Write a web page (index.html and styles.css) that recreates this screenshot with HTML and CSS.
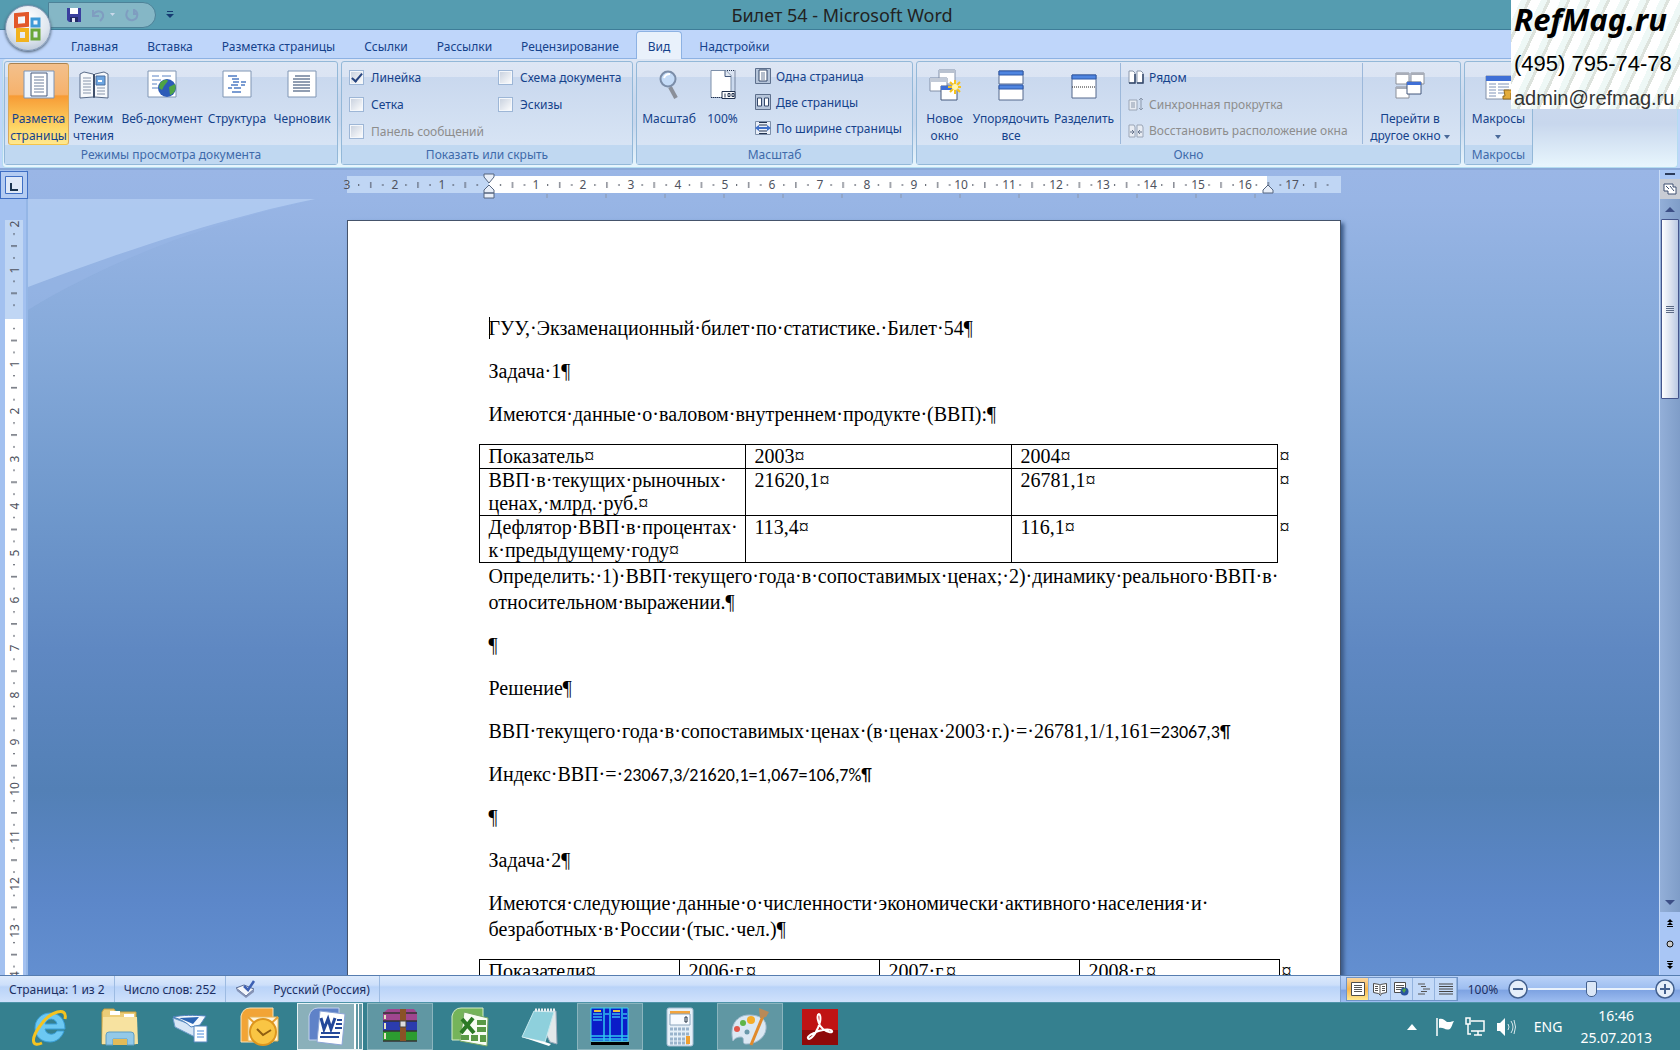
FILE: index.html
```html
<!DOCTYPE html>
<html lang="ru">
<head>
<meta charset="utf-8">
<title>Билет 54 - Microsoft Word</title>
<link rel="stylesheet" href="styles.css">
</head>
<body>
<header class="titlebar">
  <div class="quick">
    <button class="q" aria-label="Сохранить"><svg width="14" height="14" viewBox="0 0 14 14"><path d="M0 0h14v14H2l-2-2z" fill="#3a3f9e"/><path d="M3 0h8v6H3z" fill="#fff"/><path d="M3 9h8v5H3z" fill="#222a66"/><path d="M5 10h3v4H5z" fill="#dfe4f4"/></svg></button>
    <button class="q" aria-label="Отменить"><svg width="24" height="14" viewBox="0 0 24 14"><path d="M2 2v6h6M2 7c4-6 11-4 10 2-1 2-2 3-3 4" fill="none" stroke="#7f9dc0" stroke-width="2"/><path d="M19 5h5l-2.500 3z" fill="#c9d9ea"/></svg></button>
    <button class="q" aria-label="Вернуть"><svg width="14" height="14" viewBox="0 0 14 14"><path d="M3 2C-1 8 3 13 8 12s6-8 1-10M9 1v5h4" fill="none" stroke="#7f9dc0" stroke-width="2"/></svg></button>
  </div>
  <button class="q more" aria-label="Настройка панели"><svg width="8" height="8" viewBox="0 0 8 8"><path d="M1 0h6v1H1zM0 3h8L4 7z" fill="#163c72"/></svg></button>
  <h1>Билет 54 - Microsoft Word</h1>
  <button class="orb" aria-label="Office"><svg width="30" height="32" viewBox="0 0 30 32"><g fill="none"><path d="M3 3l11-1v11L3 14z" stroke="#e2582a" stroke-width="4"/><path d="M19 7h7v7h-7z" stroke="#3f9ad6" stroke-width="3"/><path d="M5 18h9v10H5z" stroke="#f2b21c" stroke-width="4"/><path d="M19 18h7v9h-7z" stroke="#6aa63a" stroke-width="3"/></g></svg></button>
</header>
<nav class="tabs">
  <button>Главная</button><button>Вставка</button><button>Разметка страницы</button><button>Ссылки</button><button>Рассылки</button><button>Рецензирование</button><button class="on">Вид</button><button>Надстройки</button>
</nav>
<section class="ribbon">
  <div class="panel">
  <div class="group g1">
    <div class="tools">
      <button class="big sel w61"><svg width="32" height="30" viewBox="0 0 32 30"><path d="M1 1h30v27H1z" fill="#eef4fc" stroke="#7d94b5"/><path d="M8 3h16v23H8z" fill="#fff" stroke="#44587c"/><path d="M11 7h10M11 10h10M11 13h10M11 16h10M11 19h10M11 22h10" stroke="#6d7f9c"/></svg><span>Разметка<br>страницы</span></button>
      <button class="big w49"><svg width="30" height="30" viewBox="0 0 30 30"><path d="M1 4l4-2 9 2 1 1 1-1 9-2 4 2v24l-13-1-1 1-1-1-13 1z" fill="#f7f9fc" stroke="#596b88"/><path d="M15 4v23" stroke="#3f4f6b" stroke-width="2"/><path d="M4 8h8M4 11h8M4 14h8M4 17h8M4 20h8M4 23h8M18 18h8M18 21h8M18 24h8" stroke="#8795ab"/><path d="M17 6h9v9h-9z" fill="#6da5e0" stroke="#4b6ea0"/><path d="M19 10h4v2h-4z" fill="#fff"/></svg><span>Режим<br>чтения</span></button>
      <button class="big w88"><svg width="30" height="30" viewBox="0 0 30 30"><path d="M1 1h28v26H1z" fill="#fff" stroke="#8096b4"/><path d="M5 6h7M15 6h9M5 10h9M5 14h5M5 18h6" stroke="#5b83c4"/><circle cx="20" cy="18" r="9" fill="#2c5bb8"/><path d="M13 13c4-4 7-4 8-2l-4 5-2 4-3-2zM22 17l6-3c2 5-1 10-5 11z" fill="#4fa444"/></svg><span>Веб-документ</span></button>
      <button class="big w62"><svg width="30" height="30" viewBox="0 0 30 30"><path d="M1 1h28v26H1z" fill="#fff" stroke="#8096b4"/><path d="M6 6h9M10 9h7M11 12h6M19 12h5M9 15h7M6 18h4M12 18h7M10 22h9M19 15h4" stroke="#4f7cc4" stroke-width="1.500"/></svg><span>Структура</span></button>
      <button class="big w68"><svg width="30" height="30" viewBox="0 0 30 30"><path d="M1 1h28v26H1z" fill="#fff" stroke="#8096b4"/><path d="M8 6h15M6 9h17M6 12h17M6 15h17M6 18h17M6 21h17" stroke="#6e7f99" stroke-width="1.300"/></svg><span>Черновик</span></button>
    </div>
    <h2>Режимы просмотра документа</h2>
  </div>
  <div class="group g2">
    <div class="tools checks">
      <label><input type="checkbox" checked>Линейка</label><label><input type="checkbox">Схема документа</label>
      <label><input type="checkbox">Сетка</label><label><input type="checkbox">Эскизы</label>
      <label class="off"><input type="checkbox" disabled>Панель сообщений</label>
    </div>
    <h2>Показать или скрыть</h2>
  </div>
  <div class="group g3">
    <div class="tools">
      <button class="big w58"><svg width="20" height="30" viewBox="0 0 20 30"><path d="M11 17l6 11" stroke="#8a8f99" stroke-width="4"/><circle cx="9" cy="9" r="7.500" fill="#c4dbf7" stroke="#7b8da8" stroke-width="2"/><path d="M5 8c1-3 3-4 6-4" stroke="#fff" stroke-width="2" fill="none"/></svg><span>Масштаб</span></button>
      <button class="big w49"><svg width="26" height="31" viewBox="0 0 26 31"><path d="M1 1h15l5 5v22H1z" fill="#fff" stroke="#7d8fa9"/><path d="M15 1v6h6" fill="#dfe7f2" stroke="#44587c"/><path d="M17 1h8v27H1" fill="none" stroke="#22324f" stroke-dasharray="1 1"/><path d="M12 22h13v7H12z" fill="#fff" stroke="#22324f"/><path d="M15 24v4M18 24h2v3h-2zM22 24h2v3h-2z" stroke="#22324f" fill="none"/></svg><span>100%</span></button>
      <div class="small zoomcol">
        <button><svg width="16" height="16" viewBox="0 0 16 16"><path d="M.5.500h15v15H.500z" fill="#b6c5da" stroke="#5d6f8c"/><path d="M4 2h8v11H4z" fill="#fff" stroke="#34486b"/><path d="M6 5h4M6 7h4M6 9h4M6 11h4" stroke="#6b7c98"/></svg>Одна страница</button>
        <button><svg width="16" height="16" viewBox="0 0 16 16"><path d="M.5.500h15v15H.500z" fill="#b6c5da" stroke="#5d6f8c"/><path d="M2.500 4h4v8h-4zM9.500 4h4v8h-4z" fill="#fff" stroke="#34486b"/></svg>Две страницы</button>
        <button><svg width="16" height="16" viewBox="0 0 16 16"><path d="M.5 1.500h15v13H.500z" fill="#e9eff8" stroke="#7d8fa9"/><path d="M4 2.500h8M4 5h8M4 11h8M4 13.500h8" stroke="#22324f"/><path d="M0 8l4-3v2h8V5l4 3-4 3V9H4v2z" fill="#3f6fc9"/></svg>По ширине страницы</button>
      </div>
    </div>
    <h2>Масштаб</h2>
  </div>
  <div class="group g4">
    <div class="tools">
      <button class="big w49"><svg width="32" height="32" viewBox="0 0 32 32"><path d="M10 1h16v14H10z" fill="#fff" stroke="#8290a8"/><path d="M10 1h16v3H10z" fill="#b9c2d0"/><path d="M1 9h17v13H1z" fill="#fff" stroke="#8290a8"/><path d="M1 9h17v4H1z" fill="#c3cbd8"/><path d="M12 17h16v14H12z" fill="#fff" stroke="#44587c"/><path d="M12 17h16v4H12z" fill="#3f6fd6"/><path d="M26 11v14M19 18h14M21 13l10 10M31 13L21 23" stroke="#f6c21c" stroke-width="2"/><circle cx="26" cy="18" r="3" fill="#fff6b0"/></svg><span>Новое<br>окно</span></button>
      <button class="big w84"><svg width="26" height="32" viewBox="0 0 26 32"><path d="M1 2h24v13H1zM1 17h24v14H1z" fill="#fff" stroke="#55698c"/><path d="M1 2h24v4H1zM1 16h24v4H1z" fill="#4f85e0" stroke="#2f59a8"/></svg><span>Упорядочить<br>все</span></button>
      <button class="big w62"><svg width="26" height="30" viewBox="0 0 26 30"><path d="M1 5h24v23H1z" fill="#fff" stroke="#55698c"/><path d="M1 5h24v4H1z" fill="#4f85e0" stroke="#2f59a8"/><path d="M1 17h24" stroke="#222" stroke-dasharray="1 1"/></svg><span>Разделить</span></button>
      <div class="small wincol">
        <button><svg width="16" height="14" viewBox="0 0 16 14"><path d="M1 1h4l2 2v10H1zM9 1h4l2 2v10H9z" fill="#fff" stroke="#8a97ab"/><path d="M7 4v9H1M15 4v9H9" fill="none" stroke="#34486b" stroke-width="1.500"/></svg>Рядом</button>
        <button disabled><svg width="16" height="14" viewBox="0 0 16 14"><path d="M1 3h8v10H1z" fill="#e8ecf3" stroke="#9aa5b6"/><path d="M3 6h4M3 8h4M3 10h4M13 1v12M11 3l2-2 2 2M11 11l2 2 2-2" stroke="#8a97ab" fill="none"/></svg>Синхронная прокрутка</button>
        <button disabled><svg width="16" height="14" viewBox="0 0 16 14"><path d="M1 1h5l1 2v10H1zM9 1h5l1 2v10H9z" fill="#e8ecf3" stroke="#9aa5b6"/><path d="M2 8h4M4 6l2 2-2 2M14 8h-4M12 6l-2 2 2 2" stroke="#66748c" fill="none"/></svg>Восстановить расположение окна</button>
      </div>
      <button class="big w94"><svg width="30" height="30" viewBox="0 0 30 30"><g fill="#fff" stroke="#8a8f99"><path d="M1 3h13v11H1zM16 3h13v11H16zM1 17h13v11H1z"/></g><path d="M1 3h13v2H1zM16 3h13v2H16zM1 17h13v2H1z" fill="#a8adb8"/><path d="M12 12h14v12H12z" fill="#fff" stroke="#44587c"/><path d="M12 12h14v3H12z" fill="#3f6fd6"/></svg><span>Перейти в<br>другое окно <svg class="arr" width="6" height="4" viewBox="0 0 6 4"><path d="M0 0h6L3 4z" fill="#4a6a9a"/></svg></span></button>
    </div>
    <h2>Окно</h2>
  </div>
  <div class="group g5">
    <div class="tools">
      <button class="big w61"><svg width="28" height="30" viewBox="0 0 28 30"><path d="M1 6h26v23H1z" fill="#fff" stroke="#8290a8"/><path d="M1 6h26v5H1z" fill="#3f6fd6"/><path d="M4 14h7M13 14h11M4 17h7M13 17h11M4 20h7M13 20h11M4 23h7M13 23h6M4 26h7" stroke="#7e93b8"/><path d="M19 20h9v3h-2v6h-8v-3h2z" fill="#e3ac3c" stroke="#946a1c"/></svg><span>Макросы<br><svg class="arr" width="6" height="4" viewBox="0 0 6 4"><path d="M0 0h6L3 4z" fill="#4a6a9a"/></svg></span></button>
    </div>
    <h2>Макросы</h2>
  </div>
  </div>
</section>
<main class="work">
  <div class="left">
    <button class="corner" aria-label="Табуляция"><svg width="18" height="18" viewBox="0 0 18 18"><path d="M.5.500h17v17H.500z" fill="#dfe9f8" stroke="#3f6fc4"/><path d="M6 7v7h7" fill="none" stroke="#1c3550" stroke-width="2"/></svg></button>
    <svg class="vruler" width="18" height="760" viewBox="0 0 18 760">
      <defs><pattern id="vt" y="97" width="18" height="47.240" patternUnits="userSpaceOnUse"><path d="M8 11h2v1H8zM6 23h6v1H6zM8 35h2v1H8z" fill="#4a4f5c"/></pattern></defs>
      <path d="M0 0h18v99H0z" fill="#c0d6f4"/><path d="M0 99h18v661H0z" fill="#fff"/><path d="M0 0h18v760H0z" fill="url(#vt)"/>
      <g class="num"><text transform="translate(14 4) rotate(-90)">2</text><text transform="translate(14 50) rotate(-90)">1</text><text transform="translate(14 144) rotate(-90)">1</text><text transform="translate(14 191) rotate(-90)">2</text><text transform="translate(14 239) rotate(-90)">3</text><text transform="translate(14 286) rotate(-90)">4</text><text transform="translate(14 333) rotate(-90)">5</text><text transform="translate(14 380) rotate(-90)">6</text><text transform="translate(14 428) rotate(-90)">7</text><text transform="translate(14 475) rotate(-90)">8</text><text transform="translate(14 522) rotate(-90)">9</text><text transform="translate(14 569) rotate(-90)">10</text><text transform="translate(14 617) rotate(-90)">11</text><text transform="translate(14 664) rotate(-90)">12</text><text transform="translate(14 711) rotate(-90)">13</text><text transform="translate(14 758) rotate(-90)">14</text></g>
    </svg>
  </div>
  <div class="center">
    <div class="hband">
      <svg class="hruler" width="994" height="23" viewBox="0 0 994 23">
        <defs><pattern id="ht" x="142" width="47.240" height="17" patternUnits="userSpaceOnUse"><path d="M11 8h1v2h-1zM23 6h1v6h-1zM35 8h1v2h-1z" fill="#4a4f5c"/></pattern></defs>
        <path d="M0 0h142v17H0zM920 0h74v17h-74z" fill="#c0d6f4"/><path d="M142 0h778v17H142z" fill="#fff"/><path d="M6 0h982v17H6z" fill="url(#ht)"/>
        <path d="M200 18v4M259 18v4M318 18v4M377 18v4M436 18v4M495 18v4M554 18v4M613 18v4M672 18v4M731 18v4M790 18v4M849 18v4M908 18v4" stroke="#8b97ac"/>
        <g class="num"><text x="0" y="13">3</text><text x="48" y="13">2</text><text x="95" y="13">1</text><text x="189" y="13">1</text><text x="236" y="13">2</text><text x="284" y="13">3</text><text x="331" y="13">4</text><text x="378" y="13">5</text><text x="425" y="13">6</text><text x="473" y="13">7</text><text x="520" y="13">8</text><text x="567" y="13">9</text><text x="614" y="13">10</text><text x="662" y="13">11</text><text x="709" y="13">12</text><text x="756" y="13">13</text><text x="803" y="13">14</text><text x="851" y="13">15</text><text x="898" y="13">16</text><text x="945" y="13">17</text></g>
        <g fill="#e9eff9" stroke="#54657f"><path d="M137-2h10v3l-5 6-5-6z"/><path d="M142 9l5 5v3h-10v-3zM137 17h10v5h-10z"/><path d="M921 9l5 5v3h-10v-3z"/></g>
      </svg>
    </div>
    <div class="canvas">
      <svg class="swoosh" width="300" height="120" viewBox="0 0 300 120"><path d="M0 0h290C180 24 80 62 0 111z" fill="#9ab8e8" opacity=".5"/><path d="M0 0h287C180 22 80 58 0 88z" fill="#b4cef2" opacity=".8"/></svg>
      <article class="page">
        <p><i class="caret"></i>ГУУ,·Экзаменационный·билет·по·статистике.·Билет·54¶</p>
        <p>Задача·1¶</p>
        <p>Имеются·данные·о·валовом·внутреннем·продукте·(ВВП):¶</p>
        <table class="t3">
          <tr><td>Показатель¤</td><td>2003¤</td><td>2004¤</td><td class="end">¤</td></tr>
          <tr><td>ВВП·в·текущих·рыночных·<br>ценах,·млрд.·руб.¤</td><td>21620,1¤</td><td>26781,1¤</td><td class="end">¤</td></tr>
          <tr><td>Дефлятор·ВВП·в·процентах·<br>к·предыдущему·году¤</td><td>113,4¤</td><td>116,1¤</td><td class="end">¤</td></tr>
        </table>
        <p>Определить:·1)·ВВП·текущего·года·в·сопоставимых·ценах;·2)·динамику·реального·ВВП·в·<br>относительном·выражении.¶</p>
        <p>¶</p>
        <p>Решение¶</p>
        <p>ВВП·текущего·года·в·сопоставимых·ценах·(в·ценах·2003·г.)·=·26781,1/1,161=<span class="cal">23067,3¶</span></p>
        <p>Индекс·ВВП·=·<span class="cal">23067,3/21620,1=1,067=106,7%¶</span></p>
        <p>¶</p>
        <p>Задача·2¶</p>
        <p>Имеются·следующие·данные·о·численности·экономически·активного·населения·и·<br>безработных·в·России·(тыс.·чел.)¶</p>
        <table class="t4">
          <tr><td>Показатели¤</td><td>2006·г.¤</td><td>2007·г.¤</td><td>2008·г.¤</td><td class="end">¤</td></tr>
        </table>
      </article>
    </div>
  </div>
  <div class="scroll">
    <i class="split"></i>
    <button class="rbtn" aria-label="Линейка"><svg width="14" height="12" viewBox="0 0 14 12"><path d="M1 1h9v3h3v7H5V8H1z" fill="#fff" stroke="#3d4f70"/><path d="M3 3l3 3M7 3l4 5" stroke="#3d4f70"/></svg></button>
    <div class="track">
      <button class="ar" aria-label="Вверх"><svg width="10" height="5" viewBox="0 0 10 5"><path d="M0 5h10L5 0z" fill="#3c4f86"/></svg></button>
      <div class="thumb"><i></i><i></i><i></i><i></i></div>
      <button class="ar down" aria-label="Вниз"><svg width="10" height="5" viewBox="0 0 10 5"><path d="M0 0h10L5 5z" fill="#3c4f86"/></svg></button>
    </div>
    <div class="browse">
      <button aria-label="Предыдущая"><svg width="8" height="8" viewBox="0 0 8 8"><path d="M4 0l3 3H1zM4 3l3 3H1zM1 7h6v1H1z"/></svg></button>
      <button aria-label="Объект"><svg width="8" height="8" viewBox="0 0 8 8"><circle cx="4" cy="4" r="3" fill="#ccc" stroke="#111"/></svg></button>
      <button aria-label="Следующая"><svg width="8" height="8" viewBox="0 0 8 8"><path d="M1 0h6v1H1zM1 2h6L4 5zM1 5h6L4 8z"/></svg></button>
    </div>
  </div>
</main>
<footer class="status">
  <span class="cell">Страница: 1 из 2</span><span class="cell">Число слов: 252</span>
  <span class="cell lang"><svg width="22" height="18" viewBox="0 0 22 18"><path d="M1 8l8-3 10 4-8 7z" fill="#f3f6fb" stroke="#5a6c94"/><path d="M1 8l10 8v2L2 11zM11 16l8-7v3l-8 6z" fill="#8593b5"/><path d="M9 6l4 4 6-9" stroke="#3c60b4" stroke-width="2.500" fill="none"/></svg>Русский (Россия)</span>
  <div class="right">
    <div class="views">
      <button class="on" aria-label="Разметка страницы"><svg width="14" height="14" viewBox="0 0 14 14"><path d="M.5.500h13v13H.500z" fill="#fff" stroke="#4c4c4c"/><path d="M3 3.500h8M3 5.500h8M3 7.500h8M3 9.500h8" stroke="#555"/></svg></button>
      <button aria-label="Режим чтения"><svg width="14" height="14" viewBox="0 0 14 14"><path d="M.5 1.500l6 1 1 0 6-1v9l-5 1-1 2-2-2-5-1z" fill="#fff" stroke="#4c4c4c"/><path d="M7 3v9M2 4.500h3M2 6.500h3M2 8.500h3M9 4.500h3M9 6.500h3M9 8.500h3" stroke="#555"/></svg></button>
      <button aria-label="Веб-документ"><svg width="15" height="14" viewBox="0 0 15 14"><path d="M.5.500h11v10H.500z" fill="#fff" stroke="#4c4c4c"/><path d="M2 3.500h8M2 5.500h8M2 7.500h5" stroke="#555"/><circle cx="10.500" cy="9.500" r="4" fill="#28539e"/><path d="M8 8l3-2 1 2-2 3z" fill="#4fa444"/></svg></button>
      <button aria-label="Структура"><svg width="14" height="12" viewBox="0 0 14 12"><path d="M1 1h7M4 3.500h5M6 6h7M4 8.500h6M1 11h7" stroke="#555"/></svg></button>
      <button aria-label="Черновик"><svg width="14" height="12" viewBox="0 0 14 12"><path d="M0 1h14M0 3.500h14M0 6h14M0 8.500h14M0 11h14" stroke="#444"/></svg></button>
    </div>
    <span class="pct">100%</span>
    <button class="round" aria-label="Уменьшить"><svg width="20" height="20" viewBox="0 0 20 20"><circle cx="10" cy="10" r="9" fill="#e6effa" stroke="#44618f" stroke-width="1.500"/><path d="M5 10h10" stroke="#44618f" stroke-width="2"/></svg></button>
    <input type="range" min="10" max="190" value="100" aria-label="Масштаб">
    <button class="round" aria-label="Увеличить"><svg width="20" height="20" viewBox="0 0 20 20"><circle cx="10" cy="10" r="9" fill="#e6effa" stroke="#44618f" stroke-width="1.500"/><path d="M5 10h10M10 5v10" stroke="#44618f" stroke-width="2"/></svg></button>
  </div>
</footer>
<div class="taskbar">
  <button aria-label="Internet Explorer"><svg width="40" height="40" viewBox="0 0 40 40"><path d="M20 6c9 0 15 6 15 16H15c1 6 9 7 12 2h7c-2 6-7 11-14 11-9 0-15-6-15-14S11 6 20 6zm-5 11h12c-1-6-10-7-12 0z" fill="#6cc8f2" stroke="#3a9fd8"/><path d="M35 12c3-13-15-8-25 7C1 31 1 41 12 36" fill="none" stroke="#f5c320" stroke-width="3"/></svg></button>
  <button aria-label="Проводник"><svg width="40" height="40" viewBox="0 0 40 40"><path d="M2 5l2-3h10l2 3h20v32H2z" fill="#eccd78" stroke="#c99f3c"/><path d="M10 4h10v4H10zM24 7h10v3H24z" fill="#fff"/><path d="M3 10h34l1 27H2z" fill="#f7e2a0"/><path d="M6 38V28q0-3 3-3h22q3 0 3 3v10h-7v-6H13v6z" fill="#93c9e8" stroke="#5f9ec4"/><path d="M13 32h14v6H13z" fill="#e3bb59"/></svg></button>
  <button aria-label="Сканер"><svg width="40" height="40" viewBox="0 0 40 40"><path d="M3 11l19 7 14 5-1 5-10 2L5 20z" fill="#d7e6f6" stroke="#6e9ccc"/><path d="M3 10c10-2 20-2 33-1l-6 9-9 2c-5-5-11-8-18-10z" fill="#f6fafe" stroke="#4f82be"/><path d="M9 11l20-1-6 7z" fill="#2d66b4"/><path d="M24 19h13v16H24z" fill="#fff" stroke="#5687c0"/><path d="M27 24h7M27 27h7M27 30h7" stroke="#4c8bdc"/></svg></button>
  <button aria-label="Outlook"><svg width="40" height="40" viewBox="0 0 40 40"><path d="M1 35V9q2-8 9-8h23v34z" fill="#f2a436" stroke="#fbe3b8"/><path d="M8 10h30v24H8z" fill="#fff5dc" stroke="#e8b455"/><path d="M8 10l15 14 15-14" fill="none" stroke="#e8a030" stroke-width="2"/><circle cx="23" cy="25" r="13" fill="#f9c544" stroke="#dd961e" stroke-width="2"/><path d="M17 22l6 6 8-5" fill="none" stroke="#8f5e10" stroke-width="2"/></svg></button>
  <button class="run active" aria-label="Microsoft Word"><svg width="40" height="40" viewBox="0 0 40 40"><path d="M2 33V9q2-8 9-8h21v32z" fill="#5f82c8" stroke="#c3d2ef"/><path d="M13 4l25 3-3 31-25-3z" fill="#fff" stroke="#8ca5d6"/><path d="M14 11l3 11 4-10 3 10 4-11" fill="none" stroke="#24489a" stroke-width="3"/><path d="M30 13h5M29 17h6M28 21h7M14 26h19M13 30h19" stroke="#24489a" stroke-width="2"/></svg></button>
  <button class="run" aria-label="WinRAR"><svg width="40" height="40" viewBox="0 0 40 40"><path d="M3 6l5-4h26l3 4v8H3z" fill="#a0468f"/><path d="M3 14h34v10H3z" fill="#2b3cae"/><path d="M3 24h34v10H3z" fill="#2c9c30"/><path d="M3 6h34M3 14h34M3 24h34M3 34h34" stroke="#333" stroke-width="1.500"/><path d="M5 8v4M5 16v6M5 26v6" stroke="#e8e3c0" stroke-width="2"/><path d="M20 2h6v32h-6z" fill="#8a5226"/><path d="M20 14h6v6h-6z" fill="#ddd" stroke="#444"/></svg></button>
  <button aria-label="Excel"><svg width="40" height="40" viewBox="0 0 40 40"><path d="M2 33V9q2-8 9-8h22v32z" fill="#75b45a" stroke="#d6edc8"/><path d="M14 5l24 6-1 28-27-5z" fill="#f7fcf3" stroke="#75a860"/><path d="M12 12l12 14M23 11L11 26" stroke="#2b7a24" stroke-width="4"/><path d="M27 13h9v5h-9zM27 20h9v5h-9zM11 28h8v5h-8zM21 28h7v6h-7zM30 28h6v7h-6z" fill="#5a9a46"/></svg></button>
  <button aria-label="Блокнот"><svg width="40" height="40" viewBox="0 0 40 40"><path d="M15 4h21l1 33-7-2z" fill="#e2e8ea" stroke="#9ab"/><path d="M14 4l20 1-9 30-23-5z" fill="#8ed0dc" stroke="#c5e8ee"/><path d="M15 3h20" stroke="#e9f0f2" stroke-width="3" stroke-dasharray="2 1"/><path d="M2 30l23 5 6 2-2 2z" fill="#fff"/></svg></button>
  <button class="run" aria-label="Total Commander"><svg width="40" height="40" viewBox="0 0 40 40"><path d="M1 1h37v33H1z" fill="#0a1cc8" stroke="#3fd6f0"/><path d="M14 1v33M20 1v33M32 1v33M1 29h37M1 32h37" stroke="#2fc4ee" stroke-width="1.500"/><path d="M3 7h9M3 10h9M3 13h9M22 7h8M22 10h8M15 7h4M33 7h4M33 11h4" stroke="#39b4f0" stroke-width="1.500"/><path d="M4 4h7M23 4h7" stroke="#e8c040" stroke-width="2"/><path d="M1 35h38v3H1z"/></svg></button>
  <button aria-label="Калькулятор"><svg width="30" height="40" viewBox="0 0 30 40"><rect x="2" y="1" width="26" height="38" rx="2" fill="#e6f0f8" stroke="#a5bdd2"/><path d="M5 4h20v3H5z" fill="#f2a43c"/><path d="M5 7h20v11H5z" fill="#f7fbff" stroke="#8aa4bc"/><path d="M20 10h2v5h-2z" fill="none" stroke="#234"/><path d="M5 22h20M5 27h20M5 32h20M5 36h20" stroke="#9ab4cc" stroke-width="3" stroke-dasharray="3 1"/><path d="M21 29h4v8h-4z" fill="#f0a030"/></svg></button>
  <button class="run" aria-label="Paint"><svg width="42" height="40" viewBox="0 0 42 40"><path d="M4 34C0 18 8 8 20 8s18 5 17 14-10 15-20 15c-4 0-2-4-3-6s-8-1-10 3z" fill="#dbe8f3" stroke="#a4bccf"/><circle cx="8" cy="22" r="3" fill="#e2574a"/><circle cx="14" cy="16" r="3" fill="#5fb548"/><circle cx="22" cy="13" r="4" fill="#f5ac28"/><circle cx="18" cy="25" r="2.500" fill="#6898aa"/><path d="M34 9L22 38" stroke="#e08a2c" stroke-width="3"/><path d="M30 1l10 4-3 5-6 1z" fill="#b98a58"/></svg></button>
  <button aria-label="Adobe Reader"><svg width="38" height="38" viewBox="0 0 38 38"><path d="M1 1h36v36H1z" fill="#c01414"/><path d="M1 22h36v15H1z" fill="#8f0a0a"/><path d="M8 31c4-1 9-9 11-17 1-5 0-8-1-8-3 1-1 11 4 15s10 4 9 2c-2-3-13-1-18 2-5 2-8 5-5 6z" fill="none" stroke="#fff" stroke-width="2"/></svg></button>
  <div class="tray">
    <svg width="10" height="6" viewBox="0 0 10 6"><path d="M0 6h10L5 0z" fill="#fff"/></svg>
    <svg width="18" height="20" viewBox="0 0 18 20"><path d="M1 1v18" stroke="#fff" stroke-width="1.500"/><path d="M3 2c4-1 5 1 8 3 2 0 4 0 7-1-2 3-2 6-4 8-5 2-6-2-11-1z" fill="#fff"/></svg>
    <svg width="20" height="20" viewBox="0 0 20 20"><path d="M6 4h13v10H6M9 18h8M13 14v4M3 7v10h3M1 1h4v6H1z" fill="none" stroke="#fff" stroke-width="1.500"/></svg>
    <svg width="20" height="20" viewBox="0 0 20 20"><path d="M1 6h3l5-5v18l-5-5H1z" fill="#fff"/><path d="M12 7q2 3 0 6M15 4q4 6 0 12M18 3q3 7 0 14" fill="none" stroke="#d7e8ec"/></svg>
    <span>ENG</span>
    <time>16:46<br>25.07.2013</time>
  </div>
</div>
<aside class="stamp"><b>RefMag.ru</b><span class="tel">(495) 795-74-78</span><span class="mail">admin@refmag.ru</span></aside>
</body>
</html>
```
FILE: styles.css
```css
* { box-sizing: border-box; }
body {
  margin: 0; height: 100vh; overflow: hidden; display: flex; flex-direction: column;
  font: 12px/17px "Noto Sans", "Open Sans", sans-serif; color: #15428b; background: #bfd6fa;
  position: relative;
}
button { font: inherit; color: inherit; background: none; border: 0; padding: 0; margin: 0; }
svg { display: block; flex: none; }
h1, h2, p { margin: 0; font-weight: normal; }

.titlebar { height: 30px; flex: none; background: #559cb0; border-bottom: 1px solid #3e7d98; display: flex; align-items: center; padding-left: 48px; position: relative; }
.quick { height: 26px; width: 108px; display: flex; align-items: center; gap: 10px; padding-left: 18px; background: #85b7c6; border: 1px solid #4d8298; border-radius: 0 13px 13px 0; }
.more { margin-left: 10px; }
h1 { position: absolute; left: 0; right: 0; text-align: center; padding-left: 4px; font-size: 18px; line-height: 32px; color: #222; }
.orb { position: absolute; left: 5px; top: 5px; width: 46px; height: 46px; border-radius: 50%; background: radial-gradient(circle at 50% 30%, #fff, #dfe6ef 55%, #a9b9cd); border: 1px solid #7f95b2; display: grid; place-items: center; z-index: 2; box-shadow: 0 1px 3px #456; }

.tabs { height: 29px; flex: none; display: flex; align-items: flex-end; gap: 5px; padding-left: 59px; background: #bfd6fa; border-bottom: 1px solid #8db2e3; }
.tabs button { height: 27px; padding: 2px 11px 0; border: 1px solid transparent; border-bottom: 0; }
.tabs .on { background: #e9f1fb; border-color: #8db2e3; border-radius: 4px 4px 0 0; margin-bottom: -1px; height: 28px; padding-bottom: 1px; }

.ribbon { flex: none; height: 111px; padding: 0 2px; background: #bfd6fa; border-bottom: 2px solid #8ba9d8; }
.panel { height: 109px; display: flex; gap: 3px; padding: 2px 1px; border: 1px solid #b4dcf0; border-top: 0; border-radius: 4px; background: linear-gradient(#dde6f4, #cbd9ee 35%, #c8d7ed 60%, #e8f6fd); }
.group { flex: none; display: flex; flex-direction: column; border: 1px solid #93b8d8; border-radius: 3px; background: linear-gradient(#dde6f4, #dbe4f3 15px, #c9d8ee 15px, #dbe7f6); }
.group h2 { height: 19px; flex: none; text-align: center; font-size: 12px; line-height: 19px; color: #3e6aaa; background: #c0d8f1; }
.tools { flex: 1; min-height: 0; display: flex; padding: 1px 3px; }
.g1 { width: 334px; } .g2 { width: 292px; } .g3 { width: 277px; } .g4 { width: 545px; } .g5 { width: 69px; }
.big { display: flex; flex-direction: column; align-items: center; flex: none; height: 82px; padding-top: 5px; white-space: nowrap; border: 1px solid transparent; border-radius: 3px; text-align: center; }
.big > svg { height: 41px; padding-bottom: 9px; }
.arr { display: inline-block; vertical-align: middle; }
.w49 { width: 49px; } .w58 { width: 58px; } .w61 { width: 61px; } .w62 { width: 62px; } .w68 { width: 68px; } .w84 { width: 84px; } .w88 { width: 88px; } .w94 { width: 94px; }
.sel { background: linear-gradient(#f3c08c, #f6b26c 38%, #f79b35 40%, #fdd767 80%, #ffe88f); border-color: #a9814e #d9a85a #f5c44a; }
.checks { display: grid; grid-template-columns: 149px 1fr; grid-auto-rows: 27px; padding: 2px 7px 0; }
.checks label { display: flex; align-items: center; gap: 7px; white-space: nowrap; }
.checks input { appearance: none; width: 15px; height: 15px; margin: 0; border: 1px solid #9db6d6; background: linear-gradient(135deg, #c6cfdd, #fff); box-shadow: inset 0 0 0 1px #f4f7fb; display: grid; place-items: center; }
.checks input:checked::after { content: ""; width: 4px; height: 9px; border: solid #27447f; border-width: 0 2px 2px 0; transform: rotate(40deg); margin-top: -3px; }
.off, button:disabled { color: #8d8d8d; }
.small { display: flex; flex-direction: column; }
.small button { display: flex; align-items: center; gap: 5px; height: 27px; white-space: nowrap; }
.zoomcol { padding-left: 8px; }
.zoomcol button { height: 26px; }
.wincol { padding: 1px 8px 0; margin-left: 5px; box-shadow: inset 1px 0 #9cb8da, inset -1px 0 #9cb8da; width: 243px; }

.work { flex: 1; min-height: 0; display: flex; background: linear-gradient(#9ab6e6, #98b5e5 30px, #86aada 170px, #6f98cc 340px, #5f88c2 480px, #5380b6 620px, #5c87c9 730px, #638fd0); }
.left { width: 28px; flex: none; background: linear-gradient(90deg, #a3c1f0 26px, #94b6e6 26px); overflow: hidden; }
.corner { display: grid; place-items: center; width: 28px; height: 28px; margin-top: 1px; border: 1px solid #3f6fc4; background: #b4ccf2; }
.vruler { margin: 21px 0 0 5px; }
.num { font-size: 12px; fill: #4f5360; text-anchor: middle; }
.center { flex: 1; min-width: 0; display: flex; flex-direction: column; }
.hband { height: 29px; flex: none; padding-top: 6px; display: flex; justify-content: center; }
.hruler { overflow: visible; }
.canvas { flex: 1; min-height: 0; overflow: hidden; position: relative; padding-top: 21px; }
.swoosh { position: absolute; left: 0; top: 0; }
.page { position: relative; width: 994px; margin: 0 auto; min-height: 1403px; background: #fff; border: 1px solid #45536b; box-shadow: 3px 3px 4px #3b5a87; padding: 94px 0 0 141px; color: #000; font: 20px/26px "Liberation Serif", "Times New Roman", serif; white-space: nowrap; }
.page p { margin-bottom: 17px; }
.caret { display: inline-block; width: 1px; height: 22px; margin-right: -1px; background: #000; vertical-align: -4px; }
.cal { font: 18px/20px "Carlito", "Open Sans", sans-serif; }
.page table { border-collapse: collapse; table-layout: fixed; width: 813px; margin: 1px 0 0 -10px; line-height: 23px; }
.page td { border: 1px solid #000; padding: 0 0 0 9px; vertical-align: top; }
.t3 td { width: 266px; } .t4 td { width: 200px; }
.page td.end { width: 14px; border: 0; padding: 0 0 0 2px; }
.scroll { width: 21px; flex: none; display: flex; flex-direction: column; background: #a9c6f5; border-left: 1px solid #c9dcf8; align-items: stretch; }
.split { width: 10px; height: 2px; margin: 3px auto 4px; background: #2b3b5c; }
.rbtn { height: 20px; background: #c8ccd4; display: grid; place-items: center; }
.track { flex: 1; display: flex; flex-direction: column; background: linear-gradient(90deg, #93afd8, #7f9dc8); padding: 0 1px; }
.ar { height: 20px; display: grid; place-items: center; }
.down { margin-top: auto; }
.thumb { height: 180px; border: 1px solid #44558c; border-radius: 1px; background: linear-gradient(90deg, #fff, #dbe2ef 55%, #b9c9e4); display: flex; flex-direction: column; align-items: center; justify-content: center; gap: 1px; }
.thumb i { width: 8px; height: 1px; background: #5b6a86; }
.browse { height: 63px; display: flex; flex-direction: column; justify-content: space-around; align-items: center; }

.status { height: 27px; flex: none; display: flex; align-items: stretch; line-height: 27px; background: linear-gradient(#dceafc, #cddffa 9px, #b9d3f8 11px, #cfe1fb); border-top: 1px solid #567db0; color: #1c2f62; }
.cell { padding: 0 9px; border-right: 1px solid #9dbbe2; white-space: nowrap; }
.lang { display: flex; align-items: center; gap: 16px; }
.right { margin-left: auto; width: 340px; display: flex; align-items: center; padding-left: 5px; background: linear-gradient(#b9d2f8, #9dbdf0 50%, #7ea3e2 55%, #9dbdf0); border-left: 1px solid #7ea0cf; }
.views { display: flex; border: 1px solid #6f93c6; background: #c4daf8; }
.views button { width: 22px; height: 22px; display: grid; place-items: center; border-right: 1px solid #93b3de; }
.views .on { background: linear-gradient(#fbd7a0, #f8b64c 50%, #ffe890); }
.pct { width: 50px; text-align: center; }
.round { width: 20px; }
.right input { appearance: none; flex: 1; height: 20px; margin: 0; min-width: 0; background: linear-gradient(#e9f2fd, #e9f2fd) center/100% 2px no-repeat; }
.right input::-webkit-slider-thumb { appearance: none; width: 11px; height: 16px; background: #dbe7f7; border: 1px solid #44618f; border-radius: 2px 2px 5px 5px; }
.right .round:last-child { margin-right: 5px; }

.taskbar { height: 48px; flex: none; background: #35808f; border-top: 1px solid #4d93a8; display: flex; gap: 4px; padding-left: 17px; }
.taskbar > button { width: 66px; height: 47px; display: grid; place-items: center; border: 1px solid transparent; }
.taskbar .run { background: #6097a3; border-color: #8bb5be; }
.taskbar .active { background: linear-gradient(90deg, #8ab0ba 56px, #fff 56px, #fff 58px, #6097a3 58px, #6097a3 60px, #fff 60px, #fff 61px, #6097a3 61px); border-color: #e8f2f4; padding-right: 6px; }
.tray { margin-left: auto; display: flex; align-items: center; color: #fff; font-size: 14px; padding-right: 28px; }
.tray svg + svg { margin-left: 11px; }
.tray svg:first-child { margin-right: 8px; }
.tray span, .tray time { margin-left: 18px; }
.tray time { line-height: 22px; text-align: center; }

.stamp { position: absolute; right: 0; top: 0; width: 169px; height: 109px; background: repeating-linear-gradient(115deg, #fff 0 9px, #eef8f6 9px 15px, #dde3dd 15px 18px); color: #000; display: flex; flex-direction: column; font-family: "Liberation Sans", Arial, sans-serif; white-space: nowrap; padding-left: 3px; z-index: 3; }
.stamp b { font: italic bold 31px/38px "Noto Sans", sans-serif; }
.tel { font-size: 22px; line-height: 52px; }
.mail { font-size: 20px; line-height: 16px; color: #333; }
```
